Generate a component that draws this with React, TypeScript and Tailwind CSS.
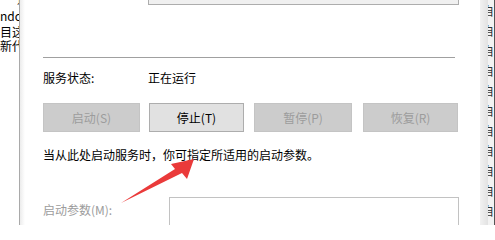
import React from 'react';

const font = { fontFamily: '"Microsoft YaHei", "Noto Sans CJK SC", sans-serif' };

const buttons = [
  { label: '启动(S)', enabled: false, cls: 'w-[97px]' },
  { label: '停止(T)', enabled: true, cls: 'w-[95px] ml-[9px]' },
  { label: '暂停(P)', enabled: false, cls: 'w-[98px] ml-[10px]' },
  { label: '恢复(R)', enabled: false, cls: 'w-[95px] ml-[11px]' },
];

export default function App() {
  return (
    <div
      className="relative flex w-[495px] h-[225px] overflow-hidden bg-white text-[12px] text-black"
      style={font}
    >
      {/* window behind, left side */}
      <div className="w-[19px] shrink-0 overflow-hidden whitespace-nowrap leading-[16px]">
        <div className="h-[16px] -mt-[9px] flex">
          <span className="text-[#1e6fd9] ml-[3px]">·</span>
          <span className="ml-[2px]">适</span>
        </div>
        <div className="mt-[1px] h-[16px]">ndc</div>
        <div className="h-[16px]">目这</div>
        <div className="-mt-[2px] h-[16px]">新代</div>
      </div>
      <div className="w-px shrink-0 bg-[#a9a9a9]" />
      <div className="w-[5px] shrink-0 bg-gradient-to-r from-[#ececec] to-white" />

      {/* dialog body */}
      <div className="flex-1 min-w-0">
        <div className="ml-[123px] w-[311px] h-[5px] bg-[#f0f0f0] border-x border-b border-[#adadad]" />
        <div className="mt-[52px] ml-[18px] w-[412px] h-px bg-[#a0a0a0]" />

        <div className="mt-[12px] ml-[18px] flex leading-[16px]">
          <span className="w-[105px]">服务状态:</span>
          <span>正在运行</span>
        </div>

        <div className="mt-[17px] ml-[18px] flex">
          {buttons.map((b) => (
            <div
              key={b.label}
              className={`${b.cls} h-[29px] flex items-center justify-center border ${
                b.enabled
                  ? 'bg-[#e1e1e1] border-[#adadad] text-black'
                  : 'bg-[#cccccc] border-[#c4c4c4] text-[#9c9c9c]'
              }`}
            >
              {b.label}
            </div>
          ))}
        </div>

        <div className="mt-[15px] ml-[18px] leading-[16px]">
          当从此处启动服务时，你可指定所适用的启动参数。
        </div>

        <div className="mt-[34px] ml-[18px] flex items-start">
          <span className="w-[126px] mt-[5px] leading-[16px] text-[#9c9c9c]">启动参数(M):</span>
          <div className="w-[290px] h-[40px] border border-[#c2c2c2] bg-white" />
        </div>
      </div>

      {/* window behind, right side */}
      <div className="w-[8px] shrink-0 bg-gradient-to-r from-[#f2f2f2] to-[#e2e2e2]" />
      <div className="w-[6px] shrink-0 overflow-hidden bg-[#f3f3f3] text-[12px] leading-[20px] text-[#333] whitespace-nowrap">
        <div className="-ml-[6px] mt-[1px]">
          {Array.from({ length: 12 }).map((_, i) => (
            <div key={i} className="h-[20px]">自动</div>
          ))}
        </div>
      </div>
      <div className="w-px shrink-0 bg-[#555]" />

      {/* red annotation arrow */}
      <svg
        className="absolute left-0 top-0 pointer-events-none"
        width="495"
        height="225"
        viewBox="0 0 495 225"
      >
        <polygon
          points="121,203 175,169 171,164 194,159 187,179 182,173"
          fill="#ea3a3a"
        />
      </svg>
    </div>
  );
}
